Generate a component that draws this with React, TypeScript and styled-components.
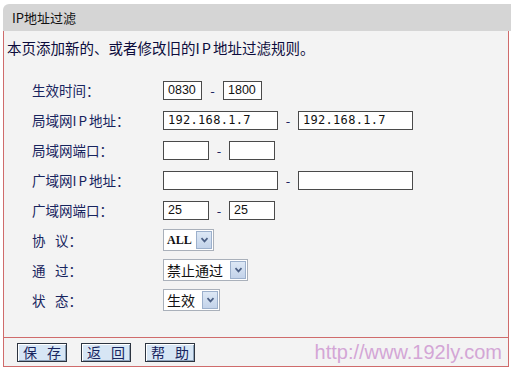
import React from "react";
import styled, { createGlobalStyle } from "styled-components";

const GlobalStyle = createGlobalStyle`
  html, body {
    margin: 0;
    padding: 0;
    background: #ffffff;
  }
  body {
    font-family: "Noto Sans CJK SC", "DejaVu Sans", sans-serif;
  }
`;

const Page = styled.div`
  padding: 4px 0 0 3px;
  width: 508px;
`;

const TitleBar = styled.div`
  height: 27px;
  background: #d5d5d5;
  border-top-left-radius: 6px;
  display: flex;
  align-items: center;
  padding-left: 9px;
  font-size: 13px;
  color: #111111;
`;

const Panel = styled.div`
  width: 504px;
  background: #f3f3f3;
  border: 1px solid #cf6b6b;
  border-top: none;
`;

const Content = styled.div`
  padding: 8px 0 22px 0;
`;

const Intro = styled.div`
  height: 18px;
  line-height: 18px;
  padding-left: 3px;
  font-size: 14.5px;
  color: #0c0c3c;
  margin-bottom: 18px;
`;

// half-width latin inside CJK text, spaced like the bitmap font of the original
const Latin = styled.span`
  letter-spacing: 2px;
`;

const Row = styled.div`
  display: flex;
  align-items: center;
  height: 30px;
`;

const Label = styled.div`
  width: 131px;
  padding-left: 28px;
  font-size: 13.5px;
  color: #17245e;
  white-space: pre;
`;

const TextBox = styled.div<{ $w: number }>`
  width: ${(p) => p.$w}px;
  height: 19px;
  box-sizing: border-box;
  border: 1px solid #4a4a4a;
  background: #ffffff;
  display: flex;
  align-items: center;
  padding-left: 4px;
  font-family: "Liberation Sans", Arial, sans-serif;
  font-size: 12.5px;
  color: #111111;
`;

const IpText = styled.span`
  font-family: "DejaVu Sans Mono", monospace;
  font-size: 12px;
  letter-spacing: 0.3px;
`;

const Dash = styled.span<{ $gap: number }>`
  width: ${(p) => p.$gap}px;
  text-align: center;
  font-size: 13px;
  color: #17245e;
`;

const Select = styled.div<{ $w: number }>`
  width: ${(p) => p.$w}px;
  height: 22px;
  box-sizing: border-box;
  border: 1px solid #a9b0ba;
  background: #ffffff;
  display: flex;
  align-items: center;
  justify-content: space-between;
  padding: 1px 1px 1px 3px;
`;

const SelectText = styled.span<{ $latin?: boolean }>`
  font-family: ${(p) =>
    p.$latin
      ? `"Liberation Serif", "Times New Roman", serif`
      : `"Noto Sans CJK SC", sans-serif`};
  font-weight: ${(p) => (p.$latin ? 700 : 400)};
  font-size: ${(p) => (p.$latin ? "12px" : "14px")};
  color: #111111;
`;

const ArrowButton = styled.div`
  width: 16px;
  height: 18px;
  box-sizing: border-box;
  border: 1px solid #9cb0cc;
  background: linear-gradient(#dde8f5, #c3d3ea);
  display: flex;
  align-items: center;
  justify-content: center;
`;

const Footer = styled.div`
  border-top: 1px solid #cf6b6b;
  height: 28px;
  display: flex;
  align-items: center;
  padding: 0 6px 0 13px;
  gap: 14px;
`;

const Button = styled.div`
  width: 50px;
  height: 19px;
  box-sizing: border-box;
  border: 1px solid #2c3440;
  background: #d7e6f5;
  box-shadow: inset 1px 1px 0 #ffffff, inset -1px -1px 0 #8da3bb;
  display: flex;
  align-items: center;
  justify-content: center;
  font-size: 14px;
  color: #17245e;
  white-space: pre;
`;

const Watermark = styled.div`
  margin-left: auto;
  font-family: "Liberation Sans", Arial, sans-serif;
  font-size: 20px;
  color: #d3a6d6;
  line-height: 20px;
`;

const Chevron = () => (
  <svg width="9" height="6" viewBox="0 0 9 6">
    <path d="M1.5 1.2 L4.5 4.4 L7.5 1.2" fill="none" stroke="#4b5f84" strokeWidth="1.7" />
  </svg>
);

const Dropdown = ({ w, text, latin }: { w: number; text: string; latin?: boolean }) => (
  <Select $w={w}>
    <SelectText $latin={latin}>{text}</SelectText>
    <ArrowButton>
      <Chevron />
    </ArrowButton>
  </Select>
);

const GAP = "\u2002\u2009";

const App = () => {
  return (
    <Page>
      <GlobalStyle />
      <TitleBar>IP地址过滤</TitleBar>
      <Panel>
        <Content>
          <Intro>
            本页添加新的、或者修改旧的<Latin>IP</Latin>地址过滤规则。
          </Intro>
          <Row>
            <Label>生效时间：</Label>
            <TextBox $w={39}>0830</TextBox>
            <Dash $gap={21}>-</Dash>
            <TextBox $w={39}>1800</TextBox>
          </Row>
          <Row>
            <Label>
              局域网<Latin>IP</Latin>地址：
            </Label>
            <TextBox $w={115}>
              <IpText>192.168.1.7</IpText>
            </TextBox>
            <Dash $gap={20}>-</Dash>
            <TextBox $w={115}>
              <IpText>192.168.1.7</IpText>
            </TextBox>
          </Row>
          <Row>
            <Label>局域网端口：</Label>
            <TextBox $w={46} />
            <Dash $gap={20}>-</Dash>
            <TextBox $w={46} />
          </Row>
          <Row>
            <Label>
              广域网<Latin>IP</Latin>地址：
            </Label>
            <TextBox $w={115} />
            <Dash $gap={20}>-</Dash>
            <TextBox $w={115} />
          </Row>
          <Row>
            <Label>广域网端口：</Label>
            <TextBox $w={46}>25</TextBox>
            <Dash $gap={20}>-</Dash>
            <TextBox $w={46}>25</TextBox>
          </Row>
          <Row>
            <Label>{`协${GAP}议：`}</Label>
            <Dropdown w={51} text="ALL" latin />
          </Row>
          <Row>
            <Label>{`通${GAP}过：`}</Label>
            <Dropdown w={85} text="禁止通过" />
          </Row>
          <Row>
            <Label>{`状${GAP}态：`}</Label>
            <Dropdown w={57} text="生效" />
          </Row>
        </Content>
        <Footer>
          <Button>{`保${GAP}存`}</Button>
          <Button>{`返${GAP}回`}</Button>
          <Button>{`帮${GAP}助`}</Button>
          <Watermark>http://www.192ly.com</Watermark>
        </Footer>
      </Panel>
    </Page>
  );
};

export default App;
